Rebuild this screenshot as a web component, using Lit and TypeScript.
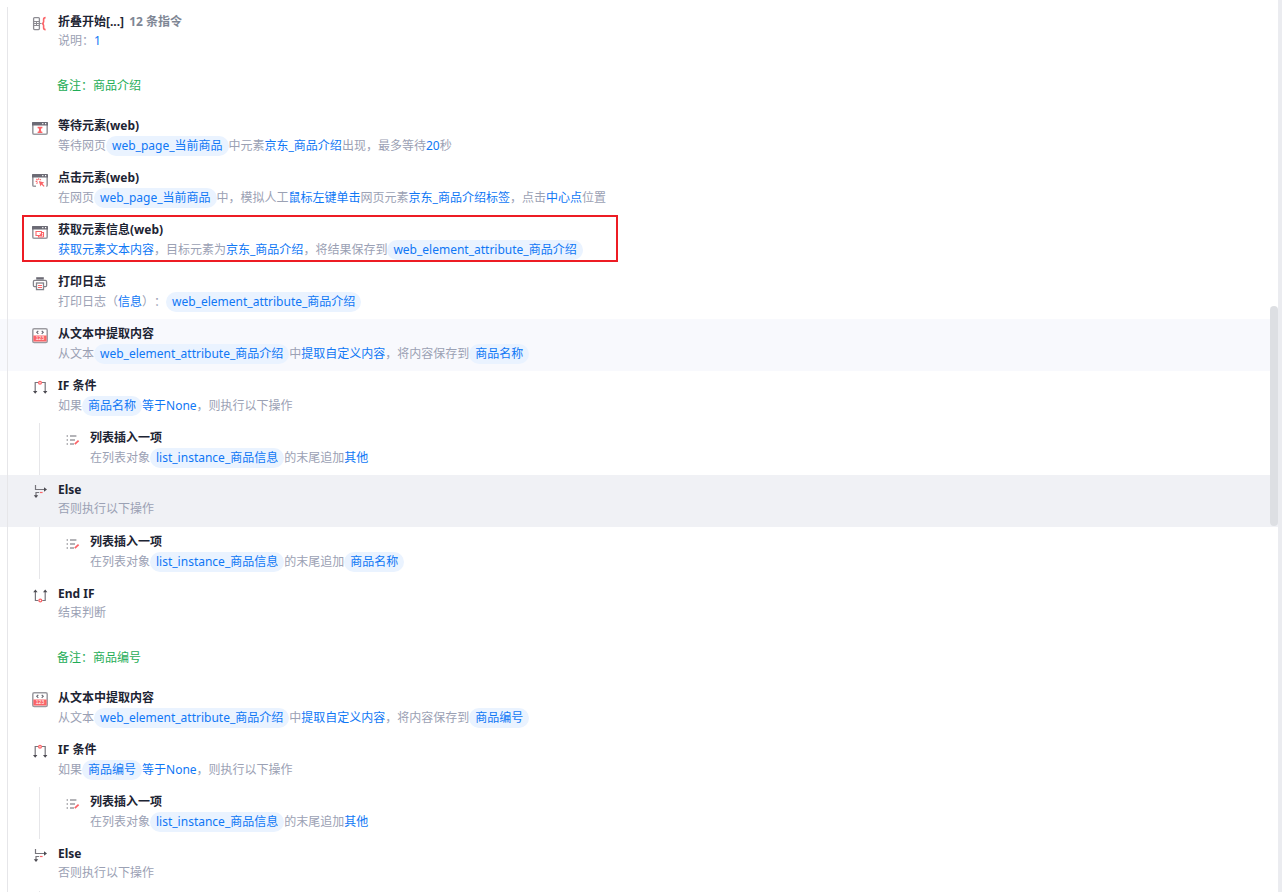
import { LitElement, html, svg, css, nothing } from "lit";
import { customElement, property } from "lit/decorators.js";
import { classMap } from "lit/directives/class-map.js";

type Part = string | { v: string } | { pill: string };

interface Step {
  icon?: string;
  title?: string;
  count?: string;
  desc?: Part[];
  note?: string;
  depth?: number;
  state?: "hover" | "selected";
  marked?: boolean;
}

const v = (text: string): Part => ({ v: text });
const pill = (text: string): Part => ({ pill: text });

const GREY = "#6c6b75";
const RED = "#fb6468";

const windowFrame = svg`
  <rect x="0.8" y="2.8" width="14.4" height="11.4" rx="1.2" fill="#fff" stroke="#9c9ba1" stroke-width="1.6"/>
  <path d="M1 2h14.2a.8.8 0 0 1 .8.8V5.4H0V2.8A.8.8 0 0 1 1 2z" fill="${GREY}"/>
  <path d="M10.2 3.6h1.2M13 3.6h1.2" stroke="#fff" stroke-width="1.2"/>`;

const icons: Record<string, unknown> = {
  fold: svg`
    <rect x="1.6" y="1.6" width="5.8" height="12" rx="1" fill="none" stroke="#8d8c92" stroke-width="1.3"/>
    <path d="M1.6 5.5h5.8M1.6 7.5h8M1.6 9.5h5.8M4.5 5v5" fill="none" stroke="#8d8c92"/>
    <path d="M13.6 1.6c-1.6 0-2 .6-2 1.8v2.4c0 1-.5 1.6-1.5 1.8 1 .2 1.5.8 1.5 1.8v2.4c0 1.2.4 1.8 2 1.8" fill="none" stroke="${RED}" stroke-width="1.6"/>`,
  wait: svg`${windowFrame}
    <path d="M5.6 7.5h4.8M5.6 12.3h4.8" stroke="${RED}" stroke-width="1.3"/>
    <path d="M6.4 7.6h3.2L8.9 9.8l.7 2.2H6.4l.7-2.2z" fill="${RED}"/>`,
  click: svg`
    <path d="M.8 4v9.2c0 .7.4 1 1 1H4M15.2 4v9.2c0 .7-.4 1-1 1" fill="none" stroke="#9c9ba1" stroke-width="1.6"/>
    <path d="M1 2h14.2a.8.8 0 0 1 .8.8V5.4H0V2.8A.8.8 0 0 1 1 2z" fill="${GREY}"/>
    <path d="M10.2 3.6h1.2M13 3.6h1.2" stroke="#fff" stroke-width="1.2"/>
    <path d="M6.6 6.2v1.6M3.6 9.4h1.7M4.4 7l1.2 1.2M8.8 7.1L7.8 8.2M4.5 11.6l1.1-1.1" stroke="${RED}" stroke-width="1.1"/>
    <path d="M6.8 9l5.4 1.6-1.8 1.1 2.2 2.2-.9.9-2.2-2.2-1 1.8z" fill="${RED}"/>`,
  info: svg`${windowFrame}
    <path d="M4 7.5h5.5v4H4zM9.5 8.5h2v4.5M6.5 11.5v1.5h5" fill="none" stroke="${RED}" stroke-width="1.1"/>
    <path d="M7.2 9.2l3.6 1.4-1.4 2z" fill="${RED}"/>`,
  print: svg`
    <path d="M4.2 1.2h7.6v2.4H4.2z" fill="${GREY}"/>
    <path d="M4.2 10.6H2.4c-.6 0-1-.4-1-1V5.7c0-.8.5-1.3 1.3-1.3h10.6c.8 0 1.3.5 1.3 1.3v3.9c0 .6-.4 1-1 1h-1.8" fill="none" stroke="#85848b" stroke-width="1.3"/>
    <rect x="4.5" y="7" width="7" height="6.6" fill="#fff" stroke="#85848b" stroke-width="1.3"/>
    <path d="M6 9.5h4M6 11.5h4" stroke="${RED}"/>`,
  extract: svg`
    <rect x="0.8" y="0.8" width="14.4" height="13.8" rx="1.4" fill="#fff" stroke="#9c9ba1" stroke-width="1.5"/>
    <path d="M6.3 2.8L4.8 4.3l1.5 1.5M9.7 2.8l1.5 1.5-1.5 1.5" fill="none" stroke="${GREY}" stroke-width="1.2"/>
    <rect x="1.4" y="7.5" width="13.2" height="6" fill="${RED}"/>
    <text x="8" y="12.3" text-anchor="middle" font-size="5" fill="#fff" font-family="Liberation Sans, sans-serif">123</text>`,
  ifStart: svg`
    <path d="M6 2.5H3.2V12M10 2.5h3.2V12" fill="none" stroke="#77767c" stroke-width="1.2"/>
    <path d="M1 11h4.4L3.2 13.8zM11 11h4.4l-2.2 2.8z" fill="#4c4b52"/>
    <circle cx="8" cy="2.8" r="1.4" fill="#fff" stroke="${RED}" stroke-width="1.3"/>`,
  ifEnd: svg`
    <path d="M6.4 12.5H3.4V3M10.2 12.5h3V3" fill="none" stroke="#77767c" stroke-width="1.2"/>
    <path d="M1.2 4.2h4.4L3.4 1.4zM11 4.2h4.4l-2.2-2.8z" fill="#4c4b52"/>
    <circle cx="8.3" cy="12.5" r="1.4" fill="#fff" stroke="${RED}" stroke-width="1.3"/>`,
  otherwise: svg`
    <path d="M3.5 1v4.5H13" fill="none" stroke="#77767c" stroke-width="1.2"/>
    <path d="M12 3.2l3 2.3-3 2.3z" fill="#4c4b52"/>
    <path d="M7.2 8.5H4v3.8" fill="none" stroke="#77767c" stroke-width="1.2"/>
    <path d="M8 8.5h2.6" stroke="${RED}" stroke-width="1.2"/>
    <path d="M1.8 11.2h4.4L4 14z" fill="#4c4b52"/>`,
  list: svg`
    <path d="M2.6 4h1.4M2.6 8h1.4M2.6 12h1.4M6 4h6.4M6 8h5M6 12h4" fill="none" stroke="#b4b4b8" stroke-width="1.8"/>
    <path d="M10.8 12.2l3.8-3.6" stroke="${RED}" stroke-width="1.7"/>`,
};

const extract = (target: string, state?: "hover"): Step => ({
  icon: "extract",
  title: "从文本中提取内容",
  desc: ["从文本", pill("web_element_attribute_商品介绍"), "中", v("提取自定义内容"), "，将内容保存到", pill(target)],
  state,
});

const ifStep = (name: string): Step => ({
  icon: "ifStart",
  title: "IF 条件",
  desc: ["如果", pill(name), v("等于None"), "，则执行以下操作"],
});

const append = (value: Part): Step => ({
  icon: "list",
  title: "列表插入一项",
  depth: 2,
  desc: ["在列表对象", pill("list_instance_商品信息"), "的末尾追加", value],
});

const elseStep = (state?: "selected"): Step => ({
  icon: "otherwise",
  title: "Else",
  desc: ["否则执行以下操作"],
  state,
});

const steps: Step[] = [
  { icon: "fold", title: "折叠开始[...]", count: "12 条指令", desc: ["说明：", v("1")] },
  { note: "备注：商品介绍" },
  {
    icon: "wait",
    title: "等待元素(web)",
    desc: ["等待网页", pill("web_page_当前商品"), "中元素", v("京东_商品介绍"), "出现，最多等待", v("20"), "秒"],
  },
  {
    icon: "click",
    title: "点击元素(web)",
    desc: [
      "在网页", pill("web_page_当前商品"), "中，模拟人工", v("鼠标左键单击"), "网页元素",
      v("京东_商品介绍标签"), "，点击", v("中心点"), "位置",
    ],
  },
  {
    icon: "info",
    title: "获取元素信息(web)",
    marked: true,
    desc: [v("获取元素文本内容"), "，目标元素为", v("京东_商品介绍"), "，将结果保存到", pill("web_element_attribute_商品介绍")],
  },
  {
    icon: "print",
    title: "打印日志",
    desc: ["打印日志（", v("信息"), "）：", pill("web_element_attribute_商品介绍")],
  },
  extract("商品名称", "hover"),
  ifStep("商品名称"),
  append(v("其他")),
  elseStep("selected"),
  append(pill("商品名称")),
  { icon: "ifEnd", title: "End IF", desc: ["结束判断"] },
  { note: "备注：商品编号" },
  extract("商品编号"),
  ifStep("商品编号"),
  append(v("其他")),
  elseStep(),
  { depth: 2 },
];

@customElement("flow-step")
class FlowStep extends LitElement {
  @property({ attribute: false }) step!: Step;

  static styles = css`
    :host {
      display: block;
    }
    .row {
      position: relative;
      display: flex;
      height: 52px;
      white-space: nowrap;
    }
    .hover {
      background: #f8f9fd;
    }
    .selected {
      background: #f0f1f5;
    }
    .guide {
      flex: none;
      box-sizing: border-box;
      width: 25px;
      margin-left: 7px;
      border-left: 1px solid #e6e6e9;
    }
    .icon {
      flex: none;
      width: 16px;
      height: 16px;
      margin: 9px 10px 0 0;
    }
    .body {
      padding-top: 5px;
    }
    .title {
      margin: 0;
      font-size: 12px;
      line-height: 20px;
      font-weight: 700;
      color: #1d2433;
    }
    .count {
      margin-left: 2px;
      color: #7e8694;
    }
    .desc {
      margin: 0;
      line-height: 18px;
      color: #9ba1b4;
    }
    .value {
      color: #0f77f5;
    }
    .pill {
      display: inline-block;
      padding: 0 6px;
      line-height: 20px;
      border-radius: 10px;
      background: #eaf3ff;
      color: #0f77f5;
    }
    .note {
      margin: 0 0 0 25px;
      line-height: 54px;
      color: #1fad57;
    }
    .mark {
      position: absolute;
      top: 0;
      left: 22px;
      box-sizing: border-box;
      width: 596px;
      height: 47px;
      border: 2px solid #ed1c24;
    }
  `;

  render() {
    const s = this.step;
    return html`
      <div class=${classMap({ row: true, hover: s.state === "hover", selected: s.state === "selected" })}>
        ${Array.from({ length: s.depth ?? 1 }, () => html`<span class="guide"></span>`)}
        ${s.icon
          ? html`<svg class="icon" viewBox="0 0 16 16" aria-hidden="true">${icons[s.icon]}</svg>`
          : nothing}
        ${s.note ? html`<p class="note">${s.note}</p>` : nothing}
        ${s.title
          ? html`<div class="body">
              <h3 class="title">${s.title}${s.count ? html` <span class="count">${s.count}</span>` : nothing}</h3>
              <p class="desc">${s.desc?.map((p) =>
                typeof p === "string"
                  ? p
                  : "pill" in p
                    ? html`<span class="pill">${p.pill}</span>`
                    : html`<span class="value">${p.v}</span>`
              )}</p>
            </div>`
          : nothing}
        ${s.marked ? html`<span class="mark"></span>` : nothing}
      </div>
    `;
  }
}

@customElement("app-root")
class AppRoot extends LitElement {
  static styles = css`
    :host {
      position: relative;
      display: block;
      box-sizing: border-box;
      height: 100vh;
      overflow: hidden;
      padding-top: 7px;
      border-right: 4px solid #ebecf0;
      background: #fff;
      font: 12px "Noto Sans", "Noto Sans CJK SC", sans-serif;
      text-spacing-trim: space-all;
    }
    .thumb {
      position: absolute;
      top: 306px;
      right: 0;
      width: 8px;
      height: 220px;
      border-radius: 4px;
      background: #dddfe3;
    }
  `;

  render() {
    return html`
      ${steps.map((step) => html`<flow-step .step=${step}></flow-step>`)}
      <div class="thumb"></div>
    `;
  }
}
